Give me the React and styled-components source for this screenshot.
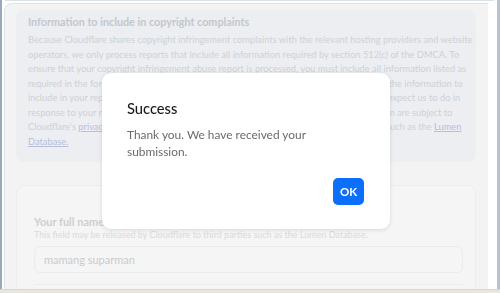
import React from 'react';
import styled, { createGlobalStyle } from 'styled-components';

const GlobalStyle = createGlobalStyle`
  html, body {
    margin: 0;
    padding: 0;
    background: #c9ced6;
    font-family: Lato, "Noto Sans", sans-serif;
  }
`;

const Screen = styled.div`
  width: 500px;
  height: 293px;
  overflow: hidden;
  display: flex;
  flex-direction: column;
  background: #fbfbfc;
`;

const Window = styled.div`
  flex: 1;
  min-height: 0;
  display: flex;
  border-left: 2px solid #9aa8bd;
  border-right: 3px solid #b9c3d0;
  background: #ffffff;
`;

const Column = styled.div`
  flex: 1;
  display: flex;
  flex-direction: column;
  padding-left: 2px;
  overflow: hidden;
`;

const PrevCard = styled.div`
  height: 2px;
  margin-left: 1px;
  margin-right: 3px;
  background: #ffffff;
  border: 1px solid #dbe1e9;
  border-top: none;
  border-radius: 0 0 6px 6px;
`;

const Panel = styled.main`
  margin-top: 2px;
  width: 484px;
  flex: 1;
  box-sizing: border-box;
  background: #f3f3f4;
  border-top: 1px solid #dfe4eb;
  border-left: 1px solid #dfe4eb;
  border-radius: 8px 0 0 0;
  padding: 6px 12px 0 11px;
`;

const InfoBox = styled.section`
  background: #eceef2;
  border-radius: 8px;
  padding: 3px 12px 13px 12px;
  overflow: hidden;
`;

const InfoTitle = styled.h3`
  margin: 0 0 3px;
  font-size: 10.8px;
  line-height: 17px;
  font-weight: 700;
  color: #c3c7cd;
`;

const InfoText = styled.p`
  margin: 0;
  font-size: 9.3px;
  line-height: 14.5px;
  color: #cdd1d6;
  white-space: nowrap;
`;

const Link = styled.a`
  color: #b6c0dc;
  text-decoration: underline;
`;

const FormCard = styled.section`
  margin-top: 23px;
  background: #f5f5f5;
  border: 1px solid #ececec;
  border-radius: 8px;
  padding: 29px 12px 0 17px;
  height: 120px;
`;

const Label = styled.div`
  font-size: 11px;
  line-height: 14px;
  font-weight: 700;
  color: #cfcfcf;
`;

const Help = styled.div`
  font-size: 9px;
  line-height: 12px;
  color: #dadada;
`;

const Input = styled.div`
  margin-top: 5px;
  height: 27px;
  box-sizing: border-box;
  border: 1px solid #ebebeb;
  border-radius: 6px;
  padding: 0 9px;
  display: flex;
  align-items: center;
  font-size: 11px;
  color: #cbcbcb;
`;

const Divider = styled.div`
  margin-top: 11px;
  border-top: 1px solid #ececec;
`;

const Taskbar = styled.div`
  height: 3px;
  border-top: 1px solid #d6d6d6;
  background: #e9e6dc;
`;

const Overlay = styled.div`
  position: fixed;
  inset: 0;
  display: flex;
  align-items: flex-start;
  justify-content: flex-start;
  padding: 73px 0 0 102px;
`;

const Dialog = styled.div`
  width: 288px;
  height: 156px;
  box-sizing: border-box;
  background: #ffffff;
  border-radius: 9px;
  box-shadow: 0 1px 4px rgba(0, 0, 0, 0.12);
  padding: 25px 26px 24px 25px;
  display: flex;
  flex-direction: column;
`;

const DialogTitle = styled.h2`
  margin: 0 0 8px;
  font-size: 14.7px;
  line-height: 20px;
  font-weight: 500;
  color: #1b1b1b;
`;

const DialogText = styled.p`
  margin: 0;
  font-size: 11.9px;
  line-height: 17px;
  color: #6b6b6b;
`;

const Actions = styled.div`
  margin-top: auto;
  display: flex;
  justify-content: flex-end;
`;

const OkButton = styled.button`
  width: 31px;
  height: 27px;
  border: none;
  border-radius: 5px;
  background: #0b6efd;
  color: #ffffff;
  font-family: inherit;
  font-size: 11.5px;
  font-weight: 700;
  padding: 0;
`;

export default function App() {
  return (
    <>
      <GlobalStyle />
      <Screen>
        <Window>
          <Column>
            <PrevCard />
            <Panel>
              <InfoBox>
                <InfoTitle>Information to include in copyright complaints</InfoTitle>
                <InfoText>
                  Because Cloudflare shares copyright infringement complaints with the relevant hosting providers and website
                  <br />
                  operators, we only process reports that include all information required by section 512(c) of the DMCA. To
                  <br />
                  ensure that your copyright infringement abuse report is processed, you must include all information listed as
                  <br />
                  required in the form below. Note that Cloudflare may also forward your report, including the information to
                  <br />
                  include in your report, to the hosting provider and website operator. Learn what you can expect us to do in
                  <br />
                  response to your report here. Please be aware that all submissions made through this form are subject to
                  <br />
                  Cloudflare's <Link>privacy policy</Link>, and notices may be forwarded to and posted by third parties such as the <Link>Lumen</Link>
                  <br />
                  <Link>Database.</Link>
                </InfoText>
              </InfoBox>
              <FormCard>
                <Label>Your full name</Label>
                <Help>This field may be released by Cloudflare to third parties such as the Lumen Database.</Help>
                <Input>mamang suparman</Input>
                <Divider />
              </FormCard>
            </Panel>
          </Column>
        </Window>
        <Taskbar />
      </Screen>
      <Overlay>
        <Dialog>
          <DialogTitle>Success</DialogTitle>
          <DialogText>Thank you. We have received your submission.</DialogText>
          <Actions>
            <OkButton>OK</OkButton>
          </Actions>
        </Dialog>
      </Overlay>
    </>
  );
}
